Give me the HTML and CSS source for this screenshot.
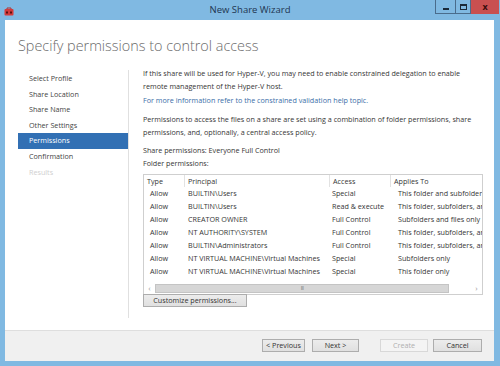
FILE: index.html
```html
<!DOCTYPE html>
<html lang="en">
<head>
  <meta charset="UTF-8" />
  <title>New Share Wizard</title>
  <link rel="stylesheet" href="styles.css">
</head>
<body>
  <div class="window">
    <div class="titlebar">
      <svg class="app-icon" width="10" height="9" viewBox="0 0 10 9">
        <path d="M3 2 V1 H7 V2" fill="none" stroke="#b03030" stroke-width="1"/>
        <rect x="0.5" y="2" width="9" height="6.5" rx="1" fill="#d23b3b"/>
        <rect x="2" y="4.5" width="2" height="2" fill="#5a1010"/>
        <rect x="6" y="4.5" width="2" height="2" fill="#5a1010"/>
      </svg>
      <div class="title">New Share Wizard</div>
      <div class="controls">
        <span class="ctl min"><i></i></span>
        <span class="ctl max"><i></i></span>
        <span class="ctl close">x</span>
      </div>
    </div>

    <div class="client">
      <h1>Specify permissions to control access</h1>

      <div class="main">
        <ul class="steps">
          <li>Select Profile</li>
          <li>Share Location</li>
          <li>Share Name</li>
          <li>Other Settings</li>
          <li class="active">Permissions</li>
          <li>Confirmation</li>
          <li class="disabled">Results</li>
        </ul>

        <div class="content">
          <p class="intro">If this share will be used for Hyper-V, you may need to enable constrained delegation to enable remote management of the Hyper-V host.</p>
          <a href="#" class="help-link">For more information refer to the constrained validation help topic.</a>
          <p class="perm-text">Permissions to access the files on a share are set using a combination of folder permissions, share permissions, and, optionally, a central access policy.</p>
          <p class="share-perms">Share permissions: Everyone Full Control</p>
          <p class="folder-label">Folder permissions:</p>

          <div class="grid">
            <div class="row head">
              <span class="c-type">Type</span>
              <span class="c-principal">Principal</span>
              <span class="c-access">Access</span>
              <span class="c-applies">Applies To</span>
            </div>
            <div class="rows">
              <div class="row"><span class="c-type">Allow</span><span class="c-principal">BUILTIN\Users</span><span class="c-access">Special</span><span class="c-applies">This folder and subfolders</span></div>
              <div class="row"><span class="c-type">Allow</span><span class="c-principal">BUILTIN\Users</span><span class="c-access">Read &amp; execute</span><span class="c-applies">This folder, subfolders, and files</span></div>
              <div class="row"><span class="c-type">Allow</span><span class="c-principal">CREATOR OWNER</span><span class="c-access">Full Control</span><span class="c-applies">Subfolders and files only</span></div>
              <div class="row"><span class="c-type">Allow</span><span class="c-principal">NT AUTHORITY\SYSTEM</span><span class="c-access">Full Control</span><span class="c-applies">This folder, subfolders, and files</span></div>
              <div class="row"><span class="c-type">Allow</span><span class="c-principal">BUILTIN\Administrators</span><span class="c-access">Full Control</span><span class="c-applies">This folder, subfolders, and files</span></div>
              <div class="row"><span class="c-type">Allow</span><span class="c-principal">NT VIRTUAL MACHINE\Virtual Machines</span><span class="c-access">Special</span><span class="c-applies">Subfolders only</span></div>
              <div class="row"><span class="c-type">Allow</span><span class="c-principal">NT VIRTUAL MACHINE\Virtual Machines</span><span class="c-access">Special</span><span class="c-applies">This folder only</span></div>
            </div>
            <div class="hscroll">
              <span class="arrow">&lsaquo;</span>
              <span class="track"><span class="thumb">III</span></span>
              <span class="arrow">&rsaquo;</span>
            </div>
          </div>

          <button type="button" class="btn customize">Customize permissions...</button>
        </div>
      </div>

      <div class="footer">
        <button type="button" class="btn prev">&lt; Previous</button>
        <button type="button" class="btn next">Next &gt;</button>
        <button type="button" class="btn create" disabled>Create</button>
        <button type="button" class="btn cancel">Cancel</button>
      </div>
    </div>
  </div>
</body>
</html>
```

FILE: styles.css
```css
:root {
  --frame: #80b9e2;
  --text: #363636;
  --muted: #6b6b6b;
  --link: #3b6ea8;
  --select: #3270b4;
  --font: 'Open Sans', 'Noto Sans', sans-serif;
}

* {
  box-sizing: border-box;
  margin: 0;
  padding: 0;
}

body {
  width: 500px;
  height: 366px;
  overflow: hidden;
  background: var(--frame);
  font-family: var(--font);
  font-size: 7.2px;
  color: var(--text);
}

.window {
  display: flex;
  flex-direction: column;
  height: 366px;
  padding: 0 6px 5px 5px;
}

/* Title bar */
.titlebar {
  height: 20px;
  display: grid;
  grid-template-columns: 1fr auto 1fr;
  align-items: start;
  margin: 0 -5px 0 -4px;
}

.app-icon {
  margin: 7px 0 0 3px;
}

.title {
  font-size: 9.5px;
  line-height: 20px;
  color: #1e3550;
}

.controls {
  justify-self: end;
  display: flex;
  height: 14px;
}

.ctl {
  display: flex;
  align-items: center;
  justify-content: center;
  height: 14px;
  border: 1px solid #4a6c8c;
  border-top: none;
}

.min { width: 20px; border-right: none; }
.max { width: 16px; }
.close {
  width: 28px;
  border: none;
  background: #c95050;
  color: #3a0c0c;
  font-size: 9px;
  font-weight: 700;
  line-height: 1;
  padding-bottom: 2px;
}

.min i {
  width: 6px;
  height: 2px;
  margin-top: 4px;
  background: #1a2a3a;
}

.max i {
  width: 7px;
  height: 6px;
  border: 1px solid #1a2a3a;
  border-top-width: 2px;
}

/* Client area */
.client {
  flex: 1;
  display: flex;
  flex-direction: column;
  background: #fff;
}

h1 {
  font-size: 14.4px;
  font-weight: 300;
  color: var(--muted);
  padding: 17px 0 0 13px;
  height: 46px;
  line-height: 18px;
}

.main {
  flex: 1;
  display: flex;
}

.steps {
  flex: none;
  list-style: none;
  width: 124px;
  padding: 1px 0 0 13px;
  border-right: 1px solid #e0e0e0;
  margin: 4px 0 12px;
}

.steps li {
  height: 15.6px;
  line-height: 15.6px;
  padding-left: 11px;
  color: #444;
}

.steps li.active {
  background: var(--select);
  color: #fff;
}

.steps li.disabled {
  color: #cfcfcf;
}

.content {
  flex: 1;
  min-width: 0;
  padding: 1px 11px 0 14px;
  line-height: 13px;
}

.help-link {
  display: block;
  margin-top: 1px;
  color: var(--link);
  text-decoration: none;
}

.perm-text {
  margin-top: 6px;
}

.share-perms {
  margin-top: 5px;
}

.folder-label {
  margin-bottom: 4px;
}

/* Permissions list */
.grid {
  border: 1px solid #cfcfcf;
  height: 121px;
  display: flex;
  flex-direction: column;
  overflow: hidden;
}

.row {
  display: flex;
  height: 13px;
  line-height: 13px;
  white-space: nowrap;
}

.row span {
  overflow: hidden;
  flex: none;
}

.row.head {
  height: 12px;
  line-height: 12px;
}

.row.head span {
  border-left: 1px solid #e2e2e2;
  padding-left: 3px;
}

.row.head span:first-child {
  border-left: none;
}

.c-type { width: 40px; padding-left: 6px; }
.c-principal { width: 145px; padding-left: 4px; }
.c-access { width: 61px; padding-left: 3px; }
.c-applies { width: 92px; padding-left: 8px; }

.row.head .c-type { padding-left: 3px; }
.row.head .c-applies { padding-left: 3px; }

.rows {
  flex: 1;
}

.hscroll {
  display: flex;
  height: 9px;
  margin: 0 0 1px;
  color: #9a9a9a;
  font-size: 8px;
  line-height: 8px;
}

.arrow {
  width: 11px;
  text-align: center;
}

.track {
  flex: 1;
  display: flex;
  padding-right: 22px;
}

.thumb {
  flex: 1;
  background: #d6d6d6;
  border: 1px solid #c4c4c4;
  text-align: center;
  font-size: 5px;
  line-height: 7px;
  color: #777;
  letter-spacing: -0.5px;
}

/* Buttons */
.btn {
  height: 13px;
  font-family: var(--font);
  font-size: 7.2px;
  color: #333;
  background: linear-gradient(#ececec, #e0e0e0);
  border: 1px solid #adadad;
  line-height: 11px;
}

.customize {
  width: 104px;
  margin-top: -1px;
  display: block;
}

.footer {
  height: 31px;
  background: #f0f0f0;
  border-top: 1px solid #dedede;
  display: flex;
  align-items: flex-start;
  justify-content: flex-end;
  padding: 8px 12px 0 0;
}

.prev { width: 43px; }
.next { width: 47px; margin-left: 7px; }
.create {
  width: 48px;
  margin-left: 21px;
  background: #f4f4f4;
  border-color: #d8d8d8;
  color: #b0b0b0;
}
.cancel { width: 49px; margin-left: 5px; }
```
